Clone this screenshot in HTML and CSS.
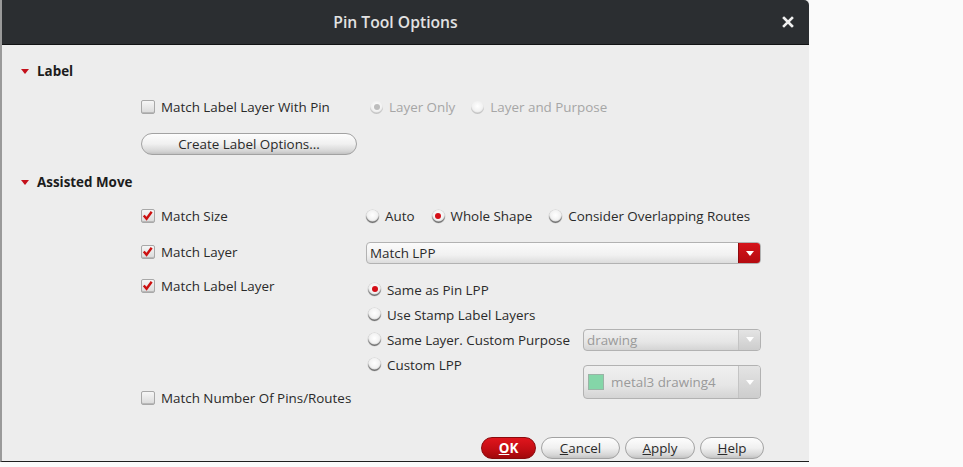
FILE: index.html
```html
<!DOCTYPE html>
<html>
<head>
<meta charset="utf-8">
<link rel="stylesheet" href="styles.css">
</head>
<body>
<div class="dialog">
  <div class="titlebar">
    <div class="title">Pin Tool Options</div>
    <svg class="close" viewBox="0 0 12 12"><path d="M2 2 L10 10 M10 2 L2 10" stroke="#f0f0f0" stroke-width="2.6" stroke-linecap="square"/></svg>
  </div>
  <div class="content">
    <div class="head"><span class="tri"></span>Label</div>
    <div class="row row-label">
      <div class="left"><span class="cb"></span>Match Label Layer With Pin</div>
      <div class="right radios disabled">
        <span class="opt"><span class="rb on"></span>Layer Only</span>
        <span class="opt"><span class="rb"></span>Layer and Purpose</span>
      </div>
    </div>
    <div class="btnrow"><button class="btn wide">Create Label Options...</button></div>
    <div class="head head2"><span class="tri"></span>Assisted Move</div>
    <div class="grid">
      <div class="left"><span class="cb checked"><svg viewBox="0 0 14 14"><path d="M3 6.5 L6 10 L11.5 2.5" fill="none" stroke="#cc1010" stroke-width="2.6"/></svg></span>Match Size</div>
      <div class="right radios">
        <span class="opt"><span class="rb"></span>Auto</span>
        <span class="opt"><span class="rb on"></span>Whole Shape</span>
        <span class="opt"><span class="rb"></span>Consider Overlapping Routes</span>
      </div>

      <div class="left"><span class="cb checked"><svg viewBox="0 0 14 14"><path d="M3 6.5 L6 10 L11.5 2.5" fill="none" stroke="#cc1010" stroke-width="2.6"/></svg></span>Match Layer</div>
      <div class="right">
        <div class="combo"><span class="ctext">Match LPP</span><span class="cbtn red"><span class="arrow"></span></span></div>
      </div>

      <div class="leftcol">
        <div class="left"><span class="cb checked"><svg viewBox="0 0 14 14"><path d="M3 6.5 L6 10 L11.5 2.5" fill="none" stroke="#cc1010" stroke-width="2.6"/></svg></span>Match Label Layer</div>
        <div class="left"><span class="cb"></span>Match Number Of Pins/Routes</div>
      </div>
      <div class="right list">
        <div class="item"><span class="opt"><span class="rb on"></span>Same as Pin LPP</span></div>
        <div class="item"><span class="opt"><span class="rb"></span>Use Stamp Label Layers</span></div>
        <div class="item split">
          <span class="opt"><span class="rb"></span>Same Layer. Custom Purpose</span>
          <div class="combo small dis"><span class="ctext">drawing</span><span class="cbtn gray"><span class="arrow"></span></span></div>
        </div>
        <div class="item split top">
          <span class="opt"><span class="rb"></span>Custom LPP</span>
          <div class="combo tall dis"><span class="swatch"></span><span class="ctext">metal3 drawing4</span><span class="cbtn gray"><span class="arrow"></span></span></div>
        </div>
      </div>
    </div>
    <div class="actions">
      <button class="btn ok"><u>O</u>K</button>
      <button class="btn cancel"><u>C</u>ancel</button>
      <button class="btn apply"><u>A</u>pply</button>
      <button class="btn help"><u>H</u>elp</button>
    </div>
  </div>
</div>
</body>
</html>
```

FILE: styles.css
```css
* { box-sizing: border-box; }
html, body { margin: 0; padding: 0; }
body {
  background: #fafafa;
  font-family: "Open Sans", "DejaVu Sans", sans-serif;
  font-size: 13.4px;
  color: #2a2a2a;
  width: 963px;
  height: 467px;
  overflow: hidden;
}
.dialog {
  width: 809px;
  height: 462px;
  background: #ededed;
  border-left: 2px solid #9a9a9a;
  border-bottom: 1px solid #1e1e1e;
  display: flex;
  flex-direction: column;
}
.titlebar {
  height: 45px;
  flex: none;
  background: #2b2e31;
  border-bottom: 1px solid #121314;
  border-top-right-radius: 5px;
  display: flex;
  align-items: center;
  position: relative;
}
.title {
  flex: 1;
  text-align: center;
  padding-right: 20px;
  color: #e2e2e2;
  font-weight: 600;
  font-size: 15.7px;
}
.close {
  position: absolute;
  right: 15px;
  top: 16px;
  width: 12px;
  height: 12px;
}
.content {
  flex: 1;
  padding-top: 16px;
  padding-left: 17px;
}
.head {
  height: 20px;
  display: flex;
  align-items: center;
  font-weight: 700;
  color: #1c1c1c;
}
.tri {
  width: 0; height: 0;
  border-left: 4px solid transparent;
  border-right: 4px solid transparent;
  border-top: 5px solid #c4111b;
  margin-left: 2px;
  margin-right: 8px;
}
.head2 { margin-top: 17px; }
.row {
  display: flex;
  padding-left: 122px;
  height: 20px;
  margin-top: 16px;
  align-items: center;
}
.left {
  display: flex;
  align-items: center;
  height: 20px;
  width: 225px;
}
.right { display: flex; align-items: center; }
.radios .opt { margin-right: 17px; }
.radios .opt:last-child { margin-right: 0; }
.opt { display: inline-flex; align-items: center; white-space: nowrap; }
.disabled { color: #a6a6a6; }
.row-label .radios { padding-left: 4px; }
.row-label .radios .opt { margin-right: 16px; }
.cb {
  width: 14px; height: 14px;
  border: 1px solid #a8a8a8;
  border-radius: 2px;
  background: linear-gradient(#f6f6f6, #dadada);
  box-shadow: inset 0 -1px 0 #b8b8b8;
  margin-right: 6px;
  flex: none;
  display: inline-flex;
}
.cb svg { width: 14px; height: 14px; margin: -1px 0 0 -1px; }
.rb {
  width: 13px; height: 13px;
  border-radius: 50%;
  background: radial-gradient(circle at 50% 40%, #ffffff, #e4e4e4);
  box-shadow: inset 0 -1.5px 1px rgba(0,0,0,0.55), 0 0 0 0.5px #cfcfcf;
  margin-right: 6px;
  flex: none;
  position: relative;
}
.rb.on::after {
  content: "";
  position: absolute;
  left: 3.5px; top: 3px;
  width: 6px; height: 6px;
  border-radius: 50%;
  background: #d40e17;
}
.disabled .rb { box-shadow: inset 0 -1.5px 1px rgba(0,0,0,0.18); }
.disabled .rb.on::after { background: #bdbdbd; }
.btnrow {
  margin-top: 16px;
  padding-left: 122px;
  height: 22px;
  display: flex;
}
.btn {
  font-family: "Open Sans", "DejaVu Sans", sans-serif;
  font-size: 13.4px;
  color: #2a2a2a;
  height: 22px;
  border: 1px solid #a2a2a2;
  border-radius: 11px;
  background: linear-gradient(#fdfdfd 0%, #f0f0f0 50%, #d6d6d6 85%, #c2c2c2 100%);
  padding: 0;
  line-height: 18px;
}
.btn.wide { width: 216px; }
.grid {
  margin-top: 14px;
  padding-left: 122px;
  display: grid;
  grid-template-columns: 225px 395px;
  grid-template-rows: 20px 22px auto;
  row-gap: 16px;
}
.leftcol {
  display: flex;
  flex-direction: column;
  justify-content: space-between;
  margin-top: -4px;
  height: 132px;
}
.list {
  flex-direction: column;
  align-items: stretch;
  margin-top: -3px;
}
.item {
  height: 25px;
  display: flex;
  align-items: center;
}
.item .opt { padding-left: 2px; }
.item.split { justify-content: space-between; }
.item.top { align-items: flex-start; height: auto; }
.item.top .opt { height: 25px; }
.item.top .combo { margin-top: 13px; }
.combo {
  height: 22px;
  width: 395px;
  border: 1px solid #b2b2b2;
  border-radius: 4px;
  background: linear-gradient(#fbfbfb, #f1f1f1 60%, #dcdcdc);
  display: flex;
  align-items: center;
  overflow: hidden;
}
.ctext { flex: 1; padding-left: 3px; }
.cbtn {
  width: 22px;
  align-self: stretch;
  display: flex;
  align-items: center;
  justify-content: center;
}
.cbtn.red { background: linear-gradient(#d5141b, #b50a10); border-left: 1px solid #8e0b0e; }
.cbtn.gray { background: linear-gradient(#e4e4e4, #cdcdcd); border-left: 1px solid #c4c4c4; }
.arrow {
  width: 0; height: 0;
  border-left: 4px solid transparent;
  border-right: 4px solid transparent;
  border-top: 5px solid #ffffff;
}
.combo.small { width: 178px; }
.combo.dis { color: #9a9a9a; background: linear-gradient(#f0f0f0, #e6e6e6 60%, #d4d4d4); }
.combo.tall { width: 178px; height: 34px; }
.swatch {
  width: 16px; height: 16px;
  margin-left: 4px;
  background: #84d6a8;
  border: 1px solid #9ab3a6;
  flex: none;
}
.combo.tall .ctext { padding-left: 7px; }
.actions {
  margin-top: 29px;
  display: flex;
  justify-content: flex-end;
  padding-right: 45px;
  gap: 5px;
}
.btn u { text-decoration: underline; }
.btn.ok {
  width: 55px;
  background: linear-gradient(#e0151d, #c10d13 60%, #a0080c);
  border-color: #8a0a0d;
  color: #ffffff;
  font-weight: 700;
}
.btn.cancel { width: 79px; }
.btn.apply { width: 70px; }
.btn.help { width: 64px; }
```
